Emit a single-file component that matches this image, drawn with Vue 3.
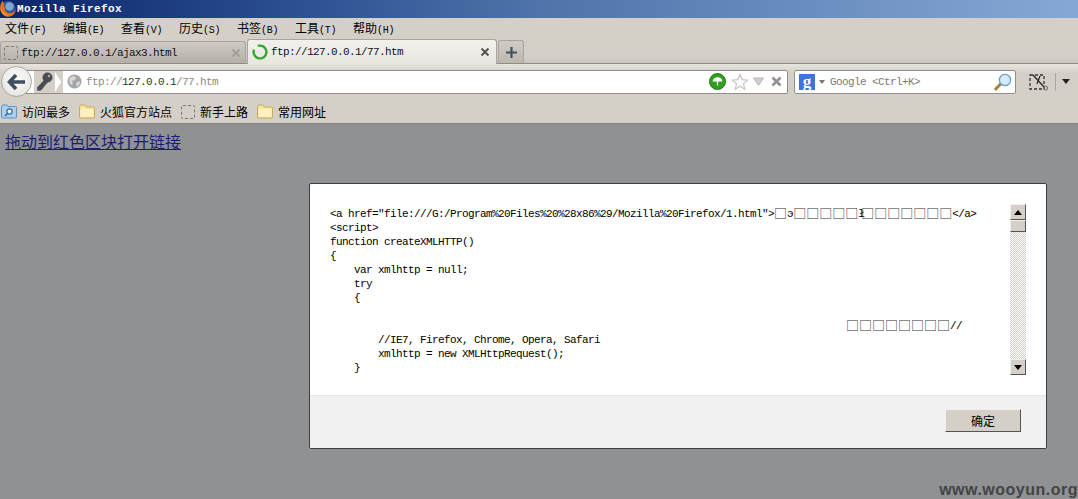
<script setup>
const menus = [
  ['文件', '(F)'], ['编辑', '(E)'], ['查看', '(V)'], ['历史', '(S)'],
  ['书签', '(B)'], ['工具', '(T)'], ['帮助', '(H)']
]
const bookmarks = [
  { label: '访问最多', kind: 'smart' },
  { label: '火狐官方站点', kind: 'folder' },
  { label: '新手上路', kind: 'blank' },
  { label: '常用网址', kind: 'folder' }
]
const box = (n) => '□'.repeat(n)
const lines = [
  [{ t: '<a href="file:///G:/Program%20Files%20%28x86%29/Mozilla%20Firefox/1.html">' }, { t: box(1), c: 'boxes' }, { t: 'э' }, { t: box(5), c: 'boxes' }, { t: 'ł', c: 'thin' }, { t: box(7), c: 'boxes' }, { t: '</a>' }],
  [{ t: '<script>' }],
  [{ t: 'function createXMLHTTP()' }],
  [{ t: '{' }],
  [{ t: '    var xmlhttp = null;' }],
  [{ t: '    try' }],
  [{ t: '    {' }],
  [{ t: '' }],
  [{ t: ' '.repeat(86) }, { t: box(8), c: 'boxes' }, { t: '//' }],
  [{ t: '        //IE7, Firefox, Chrome, Opera, Safari' }],
  [{ t: '        xmlhttp = new XMLHttpRequest();' }],
  [{ t: '    }' }]
]
</script>

<template>
  <div class="page">
    <header class="titlebar">
      <svg class="fxlogo" width="16" height="18" viewBox="0 0 16 18">
        <circle cx="8" cy="8.5" r="7.500" fill="#2c5a9c" />
        <circle cx="9.500" cy="6.500" r="4.200" fill="#7fa6cf" />
        <path d="M2.500 .5 C.5 4 -.5 7 .3 10 C1.300 14.500 5 17 8.500 16.800 C12.500 16.500 15.600 13.500 16 9 C14.500 12.500 11.500 13.500 9 13 C6 12.400 4.600 10 5 8 C4 7 3.600 5 4.600 3.600 C3.800 3.400 2.800 2 2.500 .5Z" fill="#e2701c" />
        <path d="M1 8 C1.500 13 5 16 8.500 16 C6 14.500 2.500 12.500 1 8Z" fill="#f6b43c" />
      </svg>
      <span class="apptitle">Mozilla Firefox</span>
    </header>

    <nav class="menubar">
      <span v-for="m in menus" :key="m[0]" class="menu">{{ m[0] }}<small>{{ m[1] }}</small></span>
    </nav>

    <div class="tabstrip">
      <div class="tab inactive">
        <span class="blank-ico"></span>
        <span class="tabtext">ftp://127.0.0.1/ajax3.html</span>
        <svg class="tabx" width="10" height="10" viewBox="0 0 10 10"><path d="M1.500 1.500 8.500 8.500M8.500 1.500 1.500 8.500" stroke="#a3a09a" stroke-width="2" /></svg>
      </div>
      <div class="tab active">
        <svg width="16" height="16" viewBox="0 0 16 16"><circle cx="8" cy="8" r="6.400" fill="none" stroke="#35a82f" stroke-width="2.400" stroke-dasharray="34 6" transform="rotate(-110 8 8)" /></svg>
        <span class="tabtext">ftp://127.0.0.1/77.htm</span>
        <svg class="tabx" width="10" height="10" viewBox="0 0 10 10"><path d="M1.500 1.500 8.500 8.500M8.500 1.500 1.500 8.500" stroke="#55534f" stroke-width="2" /></svg>
      </div>
      <div class="newtab">
        <svg width="13" height="13" viewBox="0 0 13 13"><path d="M6.500 1v11M1 6.500h11" stroke="#3f5164" stroke-width="2.200" /></svg>
      </div>
    </div>

    <div class="navbar">
      <div class="backbtn">
        <svg width="20" height="18" viewBox="0 0 20 18"><path d="M9 2 2.500 9 9 16M3 9h15" fill="none" stroke="#3d4f63" stroke-width="3.600" /></svg>
      </div>
      <div class="urlbar">
        <svg class="key" width="20" height="22" viewBox="0 0 20 22">
          <circle cx="13.500" cy="6.500" r="5" fill="#4a4d52" />
          <path d="M11 8 3 16.500l.5 3.500 3.500-.5L14 11Z" fill="#4a4d52" />
          <circle cx="15" cy="5" r="1.200" fill="#a9abae" />
        </svg>
        <svg class="chev" width="9" height="22" viewBox="0 0 9 22"><path d="M1 0 8 11 1 22" fill="#fff" stroke="#c9c7c2" /></svg>
        <svg class="globe" width="15" height="15" viewBox="0 0 15 15">
          <circle cx="7.500" cy="7.500" r="7" fill="#a3a5a8" />
          <path d="M3 4C5 2 8 2 9 3L8 6 5 7 6 10 4 11C2 9 2 6 3 4ZM10 8l3-1c0 3-1 5-3 6L9 10Z" fill="#d6d7d8" />
        </svg>
        <span class="url"><i>ftp://</i>127.0.0.1<i>/77.htm</i></span>
        <svg class="go" width="17" height="17" viewBox="0 0 17 17">
          <circle cx="8.500" cy="8.500" r="8" fill="#2ea01e" stroke="#1e7a12" />
          <path d="M3.500 8.500C4 5.500 6 4.200 8.500 4.200S13 5.500 13.500 8.500Z" fill="#fff" />
          <path d="M8.500 8v4.500" stroke="#fff" stroke-width="1.300" />
        </svg>
        <svg class="star" width="18" height="18" viewBox="0 0 18 18"><path d="M9 1.500 11.200 6.600 16.600 7.100 12.500 10.700 13.800 16.200 9 13.300 4.200 16.200 5.500 10.700 1.400 7.100 6.800 6.600Z" fill="#fbfbfb" stroke="#c6c6c6" stroke-width="1.200" /></svg>
        <svg class="drop" width="11" height="9" viewBox="0 0 11 9"><path d="M.5 1h10L5.500 8.500Z" fill="#d0d0d0" stroke="#b5b5b5" /></svg>
        <svg class="stop" width="11" height="11" viewBox="0 0 11 11"><path d="M1.500 1.500 9.500 9.500M9.500 1.500 1.500 9.500" stroke="#8e9092" stroke-width="2.600" /></svg>
      </div>
      <div class="searchbar">
        <span class="gbadge">g</span>
        <svg width="6" height="4" viewBox="0 0 6 4"><path d="M0 0h6L3 4Z" fill="#777" /></svg>
        <span class="placeholder">Google &lt;Ctrl+K&gt;</span>
        <svg class="mag" width="18" height="18" viewBox="0 0 18 18">
          <path d="M7 10.500 1.800 16" stroke="#b07a3c" stroke-width="3" stroke-linecap="round" />
          <circle cx="11" cy="7" r="5.600" fill="#d6ebfa" stroke="#6f9fc6" stroke-width="1.400" />
        </svg>
      </div>
      <div class="tools">
        <svg width="20" height="18" viewBox="0 0 20 18">
          <rect x="1" y="2" width="14" height="14" fill="none" stroke="#333" stroke-width="1.300" stroke-dasharray="3 2" />
          <path d="M4 2 15 14M11 3 8 11" stroke="#222" stroke-width="1.200" />
          <circle cx="16.500" cy="15" r="2" fill="none" stroke="#666" />
        </svg>
        <span class="sep"></span>
        <svg width="8" height="5" viewBox="0 0 8 5"><path d="M0 0h8L4 5Z" fill="#222" /></svg>
      </div>
    </div>

    <div class="bookmarks">
      <span v-for="b in bookmarks" :key="b.label" class="bm">
        <svg v-if="b.kind === 'smart'" width="16" height="15" viewBox="0 0 16 15">
          <path d="M.5 3.500V13a1 1 0 0 0 1 1h13a1 1 0 0 0 1-1V3.500a1 1 0 0 0-1-1H7L6 1H1.500Z" fill="#a9d0ee" stroke="#5b94c4" />
          <circle cx="8.500" cy="7.500" r="2.600" fill="#e9f5fd" stroke="#2d6ea3" stroke-width="1.200" />
          <path d="M6.500 9.500 4 12" stroke="#2d6ea3" stroke-width="1.600" />
        </svg>
        <svg v-else-if="b.kind === 'folder'" width="16" height="15" viewBox="0 0 16 15">
          <path d="M.5 3V13a1 1 0 0 0 1 1h13a1 1 0 0 0 1-1V4a1 1 0 0 0-1-1H7.500L6 1H1.500Z" fill="#f8e49c" stroke="#c9ab5c" />
          <path d="M1.500 5h13v8h-13Z" fill="#fdf1c0" />
        </svg>
        <span v-else class="blank-ico"></span>
        <span class="bmtext">{{ b.label }}</span>
      </span>
    </div>

    <main class="content">
      <a class="pagelink" href="#">拖动到红色区块打开链接</a>
    </main>

    <section class="dialog">
      <div class="dbody">
        <div class="code">
          <div v-for="(l, i) in lines" :key="i" class="line"><span v-for="(s, j) in l" :key="j" :class="s.c">{{ s.t }}</span></div>
        </div>
        <div class="scroll">
          <span class="sbtn"><svg width="8" height="5" viewBox="0 0 8 5"><path d="M4 0 8 5H0Z" fill="#000" /></svg></span>
          <span class="thumb"></span>
          <span class="track"></span>
          <span class="sbtn"><svg width="8" height="5" viewBox="0 0 8 5"><path d="M0 0h8L4 5Z" fill="#000" /></svg></span>
        </div>
      </div>
      <div class="dfoot">
        <button class="ok" type="button">确定</button>
      </div>
    </section>

    <div class="watermark">www.wooyun.org</div>
  </div>
</template>

<style>
html, body { margin: 0; padding: 0; overflow: hidden; }
</style>

<style scoped>
.page {
  position: relative;
  width: 1078px;
  height: 499px;
  overflow: hidden;
  display: flex;
  flex-direction: column;
  font-family: "Noto Sans CJK SC", sans-serif;
  font-size: 12px;
  color: #000;
  background: #d4d0c8;
}
.titlebar {
  height: 18px;
  flex: none;
  display: flex;
  align-items: center;
  background: linear-gradient(90deg, #0a246a 0%, #2f5494 30%, #4f73aa 50%, #86a8d6 100%);
}
.fxlogo { flex: none; }
.apptitle {
  margin-left: 1px;
  font: bold 11px/18px "Liberation Mono", monospace;
  letter-spacing: .4px;
  color: #fff;
}
.menubar {
  height: 21px;
  flex: none;
  display: flex;
  align-items: center;
  padding-left: 5px;
  padding-bottom: 1px;
  box-sizing: border-box;
  background: #d4d0c8;
}
.menu { width: 58px; line-height: 20px; }
.menu small {
  font: 10px "Liberation Mono", monospace;
  letter-spacing: -.3px;
}
.tabstrip {
  height: 25px;
  flex: none;
  display: flex;
  align-items: flex-end;
  gap: 1px;
  box-shadow: inset 0 -1px 0 #8e8c87;
  background: linear-gradient(#d4d0c8 70%, #c8c4bc);
}
.tab {
  box-sizing: border-box;
  display: flex;
  align-items: center;
  border-radius: 3px 3px 0 0;
}
.tab.inactive {
  width: 246px;
  height: 23px;
  padding: 0 4px 0 3px;
  gap: 3px;
  background: linear-gradient(#cfcbc4, #b4b0a9);
  border: 1px solid #a8a59f;
  border-bottom: 1px solid #8e8c87;
}
.tab.active {
  width: 250px;
  height: 25px;
  padding: 0 6px 0 4px;
  gap: 3px;
  background: linear-gradient(#f3f1ed, #e9e6e0);
  border: 1px solid #a8a59f;
  border-bottom: 0;
}
.tabtext {
  flex: 1;
  font: 11px/16px "Liberation Mono", monospace;
  letter-spacing: -.6px;
  color: #111;
}
.tabx { flex: none; }
.blank-ico {
  box-sizing: border-box;
  display: inline-block;
  width: 14px;
  height: 14px;
  flex: none;
  border: 1px dashed #777;
  border-radius: 2px;
}
.newtab {
  box-sizing: border-box;
  width: 26px;
  height: 24px;
  display: flex;
  align-items: center;
  justify-content: center;
  border: 1px solid #a8a59f;
  border-bottom: 1px solid #8e8c87;
  border-radius: 3px 3px 0 0;
  background: linear-gradient(#d0ccc5, #bcb8b0);
}
.navbar {
  height: 33px;
  flex: none;
  box-sizing: border-box;
  padding: 2px 0 0 1px;
  display: flex;
  align-items: center;
  background: linear-gradient(#e8e5df 0, #d4d0c8 9px);
}
.backbtn {
  box-sizing: border-box;
  position: relative;
  z-index: 1;
  width: 31px;
  height: 31px;
  flex: none;
  display: flex;
  align-items: center;
  justify-content: center;
  border-radius: 50%;
  border: 1px solid #a9a8a4;
  background: radial-gradient(circle at 50% 40%, #fdfdfc, #dededa);
}
.urlbar {
  box-sizing: border-box;
  width: 772px;
  height: 24px;
  margin-left: -16px;
  padding-left: 18px;
  flex: none;
  display: flex;
  align-items: center;
  background: #fff;
  border: 1px solid #8f8e8b;
  border-radius: 2px;
}
.key { flex: none; margin-left: -1px; background: #d4d0c8; height: 22px; }
.chev { flex: none; margin-right: 4px; background: #d4d0c8; height: 22px; }
.globe { flex: none; }
.url {
  flex: 1;
  margin-left: 4px;
  font: 11px/16px "Liberation Mono", monospace;
  letter-spacing: -.6px;
  color: #333;
}
.url i { font-style: normal; color: #8b8b8b; }
.go { flex: none; margin-right: 5px; }
.star { flex: none; margin-right: 4px; }
.drop { flex: none; margin-right: 7px; }
.stop { flex: none; margin-right: 5px; }
.searchbar {
  box-sizing: border-box;
  width: 222px;
  height: 24px;
  margin-left: 6px;
  padding: 0 3px 0 4px;
  flex: none;
  display: flex;
  align-items: center;
  gap: 4px;
  background: #fff;
  border: 1px solid #8f8e8b;
  border-radius: 2px;
}
.gbadge {
  width: 16px;
  height: 16px;
  display: flex;
  align-items: center;
  justify-content: center;
  background: #3f72da;
  color: #fff;
  font: bold 17px/13px "Liberation Serif", serif;
}
.placeholder {
  flex: 1;
  margin-left: 1px;
  font: 11px/16px "Liberation Mono", monospace;
  letter-spacing: -.6px;
  color: #7a7a7a;
}
.mag { flex: none; }
.tools {
  display: flex;
  align-items: center;
  margin-left: 13px;
}
.sep {
  width: 1px;
  height: 18px;
  margin: 0 6px;
  background: #aaa7a0;
}
.bookmarks {
  height: 27px;
  flex: none;
  box-sizing: border-box;
  display: flex;
  align-items: center;
  padding: 3px 0 0 1px;
  gap: 9px;
  background: #d4d0c8;
  border-bottom: 1px solid #85847f;
}
.bm { display: flex; align-items: center; gap: 5px; }
.bmtext { line-height: 16px; }
.content {
  flex: 1;
  padding: 7px 5px;
  background: repeating-conic-gradient(#8d8e90 0 25%, #939496 0 50%) 0 0 / 2px 2px;
}
.pagelink {
  font: 16px/20px "Noto Sans CJK SC", sans-serif;
  color: #1c1c70;
  text-decoration: underline;
}
.dialog {
  box-sizing: border-box;
  position: absolute;
  left: 309px;
  top: 183px;
  width: 738px;
  height: 266px;
  display: flex;
  flex-direction: column;
  background: #fff;
  border: 1px solid #3f3f3f;
  border-radius: 2px;
}
.dbody {
  height: 211px;
  flex: none;
  box-sizing: border-box;
  display: flex;
  justify-content: space-between;
  padding: 20px 20px 0 20px;
}
.code {
  padding-top: 3px;
  font: 11px/14px "Liberation Mono", monospace;
  letter-spacing: -.6px;
  white-space: pre;
}
.line { height: 14px; }
.boxes {
  display: inline-block;
  height: 14px;
  vertical-align: top;
  font: 13px/12px "Noto Sans CJK SC", sans-serif;
  letter-spacing: 0;
  color: #333;
}
.thin { letter-spacing: -3.6px; }
.scroll {
  width: 16px;
  height: 171px;
  display: flex;
  flex-direction: column;
}
.sbtn, .thumb {
  box-sizing: border-box;
  flex: none;
  display: flex;
  align-items: center;
  justify-content: center;
  background: #d4d0c8;
  border: 1px solid;
  border-color: #f2f0ec #555 #555 #f2f0ec;
}
.sbtn { height: 16px; }
.thumb { height: 12px; }
.track {
  flex: 1;
  background: repeating-conic-gradient(#d4d0c8 0 25%, #fff 0 50%) 0 0 / 2px 2px;
}
.dfoot {
  flex: 1;
  display: flex;
  align-items: flex-start;
  justify-content: flex-end;
  padding: 13px 25px 0 0;
  background: #f1f1f1;
  border-top: 1px solid #e6e6e6;
  border-radius: 0 0 2px 2px;
}
.ok {
  box-sizing: border-box;
  width: 76px;
  height: 23px;
  padding: 0;
  font: 12px/20px "Noto Sans CJK SC", sans-serif;
  color: #000;
  background: #d4d0c8;
  border: 1px solid;
  border-color: #f4f2ee #555 #555 #f4f2ee;
}
.watermark {
  position: absolute;
  right: 0;
  bottom: 0;
  font: bold 16px/18px "Liberation Sans", sans-serif;
  letter-spacing: .5px;
  color: #434446;
}
</style>
